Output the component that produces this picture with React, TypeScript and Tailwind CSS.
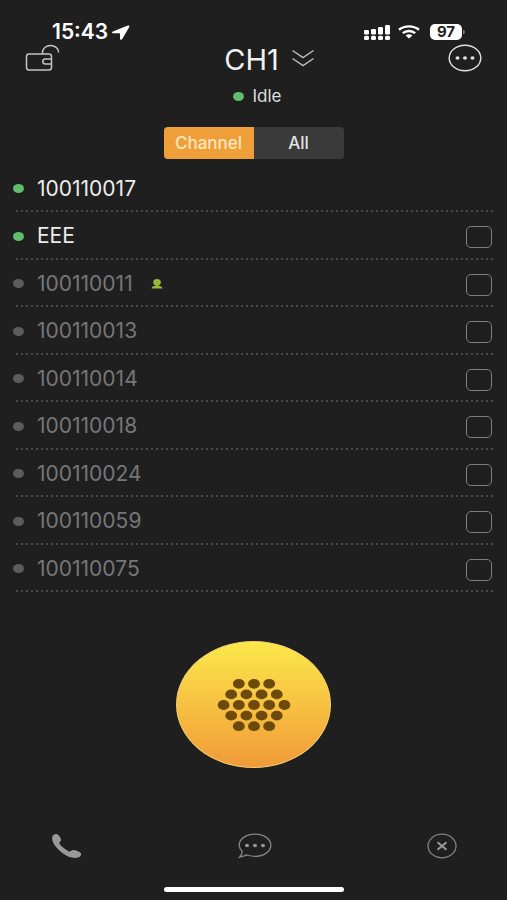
import { useState } from "react";

type Member = { name: string; online: boolean; self?: boolean; contact?: boolean };

const members: Member[] = [
    { name: "100110017", online: true, self: true },
    { name: "EEE", online: true },
    { name: "100110011", online: false, contact: true },
    { name: "100110013", online: false },
    { name: "100110014", online: false },
    { name: "100110018", online: false },
    { name: "100110024", online: false },
    { name: "100110059", online: false },
    { name: "100110075", online: false },
];

// Speaker holes, from the top row down
const holeRows = [3, 4, 5, 4, 3];

function StatusBar() {
    return (
        <div className="flex h-[42px] items-center justify-between pt-[22px] pr-[42px] pl-[52px] text-white">
            <div className="flex items-center gap-1">
                <span className="text-[21px] leading-5 font-semibold">15:43</span>
                <svg width="18" height="15" viewBox="0 0 18 15" fill="currentColor">
                    <path d="M15.8.6.9 6.4c-1.300.5-1.100 1.900.3 1.900h6c.6 0 .8.2.8.7v4.500c0 1.500 1.700 1.600 2.400.3l6.700-11.500c.7-1.200-.2-2.200-1.300-1.700Z" />
                </svg>
            </div>
            <div className="flex items-center">
                <svg width="26" height="15" viewBox="0 0 26 15" fill="currentColor">
                    <rect x="0" y="5" width="5" height="4.5" rx="1.2" />
                    <rect x="7" y="4" width="5" height="5.5" rx="1.2" />
                    <rect x="14" y="2" width="5" height="7.5" rx="1.2" />
                    <rect x="21" y="0" width="5" height="9.5" rx="1.2" />
                    <rect x="0" y="10.8" width="5" height="4.2" rx="1.5" />
                    <rect x="7" y="10.8" width="5" height="4.2" rx="1.5" />
                    <rect x="14" y="10.8" width="5" height="4.2" rx="1.5" />
                    <rect x="21" y="10.8" width="5" height="4.2" rx="1.5" />
                </svg>
                <svg className="ml-2" width="22" height="14" viewBox="0 0 22 14" fill="none" stroke="currentColor" strokeWidth="2.4">
                    <path d="M1 4.8C6.6.2 15.4.2 21 4.8" />
                    <path d="M4.8 8.2c3.500-3 8.900-3 12.400 0" />
                    <path d="M7.6 10.4c1.900-1.600 4.900-1.600 6.800 0L11 13.600Z" fill="currentColor" stroke="none" />
                </svg>
                <div className="ml-2.5 flex h-4 w-8 items-center justify-center rounded-[5px] bg-white text-[15px] leading-4 font-bold text-[#1f1f1f]">
                    97
                </div>
                <div className="ml-px h-1 w-0.5 rounded-r bg-[#777]" />
            </div>
        </div>
    );
}

function Header() {
    return (
        <header className="grid h-7 grid-cols-[1fr_auto_1fr] items-center px-[25px]">
            <button aria-label="Lock" className="justify-self-start text-[#c4c4c4]">
                <svg width="35" height="28" viewBox="0 0 35 28" fill="none" stroke="currentColor" strokeWidth="1.5">
                    <rect x="1.5" y="10" width="25" height="16" rx="2.5" />
                    <path d="M26.5 15h-6.200a2.500 2.500 0 0 0 0 5h6.200M17.500 10V8.500c0-4 3.600-7 8-7s8 2.800 8 6.300v.8" />
                </svg>
            </button>
            <button className="flex items-center gap-3 pt-1 pl-8">
                <span className="text-[29px] leading-7 text-[#f2f2f2]">CH1</span>
                <svg className="mb-1" width="24" height="18" viewBox="0 0 24 18" fill="none" stroke="#bdbdbd" strokeWidth="1.5">
                    <path d="m1.500 1.500 10.500 7 10.500-7M1.500 9.500l10.500 7 10.500-7" />
                </svg>
            </button>
            <button aria-label="More" className="justify-self-end text-[#e0e0e0]">
                <svg width="34" height="28" viewBox="0 0 34 28">
                    <ellipse cx="17" cy="14" rx="15.8" ry="12.8" fill="none" stroke="currentColor" strokeWidth="1.4" />
                    <g fill="currentColor">
                        <ellipse cx="9.5" cy="14" rx="2" ry="1.7" />
                        <ellipse cx="17" cy="14" rx="2" ry="1.7" />
                        <ellipse cx="24.5" cy="14" rx="2" ry="1.7" />
                    </g>
                </svg>
            </button>
        </header>
    );
}

function MemberRow({ member }: { member: Member }) {
    const id = `member-${member.name}`;
    return (
        <li className="flex flex-col odd:h-[47px] even:h-12">
            <div className="flex flex-1 items-center pt-0.5 pr-[15px] pl-[13px]">
                <span className={`h-[9px] w-[11px] rounded-[50%] ${member.online ? "bg-[#62bd6e]" : "bg-[#5c5c5c]"}`} />
                <label htmlFor={member.self ? undefined : id} className={`ml-[13px] text-[21px] leading-6 ${member.online ? "text-[#ececec]" : "text-[#767676]"}`}>
                    {member.name}
                </label>
                {member.contact && (
                    <svg className="ml-[18px]" width="12" height="10" viewBox="0 0 12 10" fill="#93b83a">
                        <ellipse cx="6" cy="3.2" rx="3.8" ry="3.2" />
                        <path d="M4.500 5.500h3v1.300c2 .2 3.700.8 4 2.700H.5c.3-1.900 2-2.500 4-2.700Z" />
                    </svg>
                )}
                {!member.self && (
                    <input id={id} type="checkbox" className="mt-0.5 ml-auto h-[22px] w-[26px] appearance-none rounded-[5px] border border-[#808080] checked:bg-[#ef9f3a]" />
                )}
            </div>
            <div className="mr-3.5 ml-4 h-0.5 bg-[linear-gradient(to_right,#4a4a4a_2px,transparent_2px)] bg-[length:5px_2px]" />
        </li>
    );
}

function TalkButton() {
    return (
        <button
            aria-label="Push to talk"
            className="mx-auto mt-[49px] flex h-[127px] w-[155px] items-center justify-center rounded-[50%] border border-[#f6cf72] bg-linear-to-b from-[#fbe84b] to-[#f09a38]"
        >
            <svg width="74" height="54" viewBox="0 0 74 54" fill="#6b4a0c">
                {holeRows.map((count, row) =>
                    [...Array(count)].map((_, i) => (
                        <ellipse key={`${row}-${i}`} cx={37 + (i - (count - 1) / 2) * 15.2} cy={27 + (row - 2) * 10.6} rx="5.9" ry="4.9" />
                    ))
                )}
            </svg>
        </button>
    );
}

function Footer() {
    return (
        <footer className="mt-auto px-[50px] pb-2">
            <div className="flex items-center justify-between">
                <button aria-label="Call">
                    <svg width="32" height="26" viewBox="0 0 32 26" fill="#999">
                        <path d="M2.300 3.700C3 1.500 5.800.4 7.600 1.400c1.500.9 3 3.600 3.500 5.200.3 1.600-2 2.300-1.800 3.500.5 2.500 6.700 7 9.600 8.300 1.500.4 2.800-1.400 4.600-1.400 2.300.1 5.600 1.500 7.200 2.900 1.200 1.300-.1 3.500-1.900 4.300-4.200 1.800-11.200.2-16.400-4.200C6.500 15.400 1.200 9 2.300 3.700Z" />
                    </svg>
                </button>
                <button aria-label="Messages">
                    <svg width="34" height="26" viewBox="0 0 34 26">
                        <path d="M4.200 18.300C2.300 16.500 1.200 14.500 1.200 12 1.200 6 8.200 1.200 17 1.200S32.800 6 32.800 12.200s-7 11.200-15.800 11.200c-3 0-5.500-.6-8-1.400-2 .5-4.500 1.500-7.500 2.200 1.700-1.600 2.700-3.500 2.700-5.900Z" fill="none" stroke="#858585" strokeWidth="1.3" />
                        <g fill="#999">
                            <ellipse cx="9" cy="12.5" rx="2" ry="1.7" />
                            <ellipse cx="17" cy="12.5" rx="2" ry="1.7" />
                            <ellipse cx="25" cy="12.5" rx="2" ry="1.7" />
                        </g>
                    </svg>
                </button>
                <button aria-label="Exit">
                    <svg width="30" height="26" viewBox="0 0 30 26" fill="none">
                        <ellipse cx="15" cy="13" rx="14" ry="11.8" stroke="#808080" strokeWidth="1.3" />
                        <path d="m10.500 9.200 9 7.600m0-7.600-9 7.600" stroke="#999" strokeWidth="2" />
                    </svg>
                </button>
            </div>
            <div className="mx-auto mt-7 h-[5px] w-[180px] rounded-full bg-white" />
        </footer>
    );
}

export default function App() {
    const [tab, setTab] = useState("Channel");

    return (
        <div className="flex min-h-screen flex-col bg-[#1f1f1f] font-['Inter','Liberation_Sans',sans-serif]">
            <StatusBar />
            <Header />

            <div className="flex h-[50px] items-center justify-center gap-2 pt-0.5 pl-2">
                <span className="h-[9px] w-[11px] rounded-[50%] bg-[#62bd6e]" />
                <span className="text-[17px] leading-5 text-[#dedede]">Idle</span>
            </div>

            <div className="mx-auto mt-[7px] grid h-8 w-[180px] grid-cols-2 overflow-hidden rounded-[4px] bg-[#3a3a3a]">
                {["Channel", "All"].map((name) => (
                    <button
                        key={name}
                        aria-pressed={tab === name}
                        onClick={() => setTab(name)}
                        className={`text-[17px] leading-5 font-medium ${tab === name ? "bg-[#ef9f3a] text-[#fbe8bd]" : "text-[#e2e2e2]"}`}
                    >
                        {name}
                    </button>
                ))}
            </div>

            <ul className="mt-1.5">
                {members.map((member) => (
                    <MemberRow key={member.name} member={member} />
                ))}
            </ul>

            <TalkButton />
            <Footer />
        </div>
    );
}
